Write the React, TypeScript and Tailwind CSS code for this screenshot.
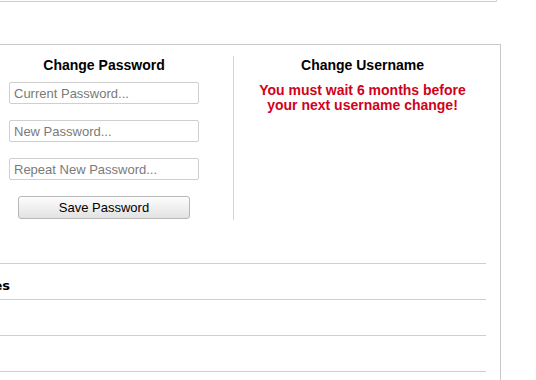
import React from "react";

const arial = { fontFamily: '"Liberation Sans", Arial, sans-serif' };

function Field({ placeholder }: { placeholder: string }) {
  return (
    <input
      type="text"
      placeholder={placeholder}
      className="box-border h-[22px] w-[190px] rounded-[2px] border border-[#cfcfcf] bg-white px-[4px] text-[13px] text-black outline-none placeholder:text-[#7a7a7a]"
      style={arial}
    />
  );
}

export default function App() {
  return (
    <div className="relative h-[380px] w-[536px] overflow-hidden bg-white" style={arial}>
      <div className="box-border h-[2px] w-[497px] rounded-br-[3px] border-b border-r border-[#cccccc]" />
      <div className="mt-[42px] box-border w-[501px] border-t border-r border-[#c8c8c8] pt-[11px]">
        <div className="flex">
          <div className="flex w-[208px] flex-col items-center pb-[1px]">
            <div className="text-[14px] font-bold leading-[18px] text-black">Change Password</div>
            <div className="mt-[8px] flex flex-col gap-[16px]">
              <Field placeholder="Current Password..." />
              <Field placeholder="New Password..." />
              <Field placeholder="Repeat New Password..." />
            </div>
            <button
              type="button"
              className="mt-[16px] box-border h-[23px] w-[172px] rounded-[3px] border border-[#b8b8b8] bg-gradient-to-b from-[#fdfdfd] to-[#e2e2e2] text-[13px] leading-none text-black"
              style={arial}
            >
              Save Password
            </button>
          </div>
          <div className="ml-[25px] flex w-[258px] flex-col items-center border-l border-[#d4d4d4]">
            <div className="text-[14px] font-bold leading-[18px] text-black">Change Username</div>
            <div className="mt-[9px] text-center text-[14px] font-bold leading-[15px] text-[#d0021b]">
              You must wait 6 months before
              <br />
              your next username change!
            </div>
          </div>
        </div>
        <div className="mt-[43px] w-[486px]">
          <div className="box-border h-[36px] border-t border-[#cfcfcf] pt-[14px]">
            <div
              className="flex w-[10px] justify-end whitespace-nowrap text-[13px] font-bold leading-[16px] text-black"
              style={{ fontFamily: '"DejaVu Sans", Verdana, sans-serif' }}
            >
              Notices
            </div>
          </div>
          <div className="box-border h-[36px] border-t border-[#cfcfcf]" />
          <div className="box-border h-[36px] border-t border-[#cfcfcf]" />
          <div className="box-border h-[36px] border-t border-[#cfcfcf]" />
        </div>
      </div>
    </div>
  );
}
